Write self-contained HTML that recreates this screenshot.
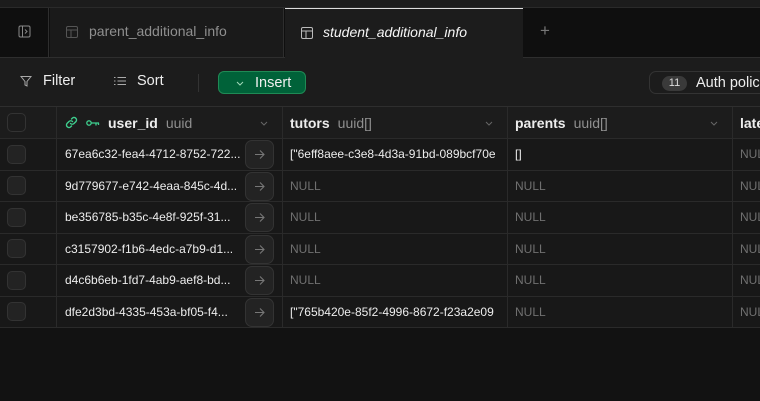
<!DOCTYPE html>
<html><head><meta charset="utf-8"><style>
*{box-sizing:border-box;margin:0;padding:0}
body{width:760px;height:401px;overflow:hidden;background:#121212;font-family:"Liberation Sans",sans-serif;color:#ededed;position:relative}
.abs{position:absolute;white-space:nowrap}
.top{left:0;top:0;width:760px;height:8px;background:#1c1c1c;border-bottom:1px solid #2a2a2a}
.tabs{left:0;top:8px;width:760px;height:50px;background:#0f0f0f;border-bottom:1px solid #2e2e2e}
.tool{left:0;top:58px;width:760px;height:49px;background:#1c1c1c;border-bottom:1px solid #2e2e2e}
.row{position:absolute;left:0;width:760px;background:#181818;border-bottom:1px solid #2a2a2a;font-size:12px}
.cell{position:absolute;top:0;height:100%;border-right:1px solid #2a2a2a;display:flex;align-items:center;white-space:nowrap;overflow:hidden}
.cb{width:19px;height:19px;border:1px solid #333;border-radius:5px;background:#232323;margin-left:7px}
.null{color:#707070}
.arr{position:absolute;left:188px;top:1px;width:29px;height:29px;border:1px solid #333;border-radius:7px;background:#232323}
</style></head><body>
<div class="abs top"></div>
<div class="abs tabs">
  <div class="abs" style="left:0;top:0;width:49px;height:49px;border-right:1px solid #2e2e2e;background:#0f0f0f">
    <svg class="abs" style="left:18px;top:17px" width="13" height="13" viewBox="0 0 13 13"><rect x="1" y="1" width="11" height="11" rx="1.5" fill="none" stroke="#888" stroke-width="1"/><line x1="4.5" y1="1" x2="4.5" y2="12" stroke="#888"/><path d="M7 4.5l2 2-2 2" fill="none" stroke="#888"/></svg>
  </div>
  <div class="abs" style="left:50px;top:0;width:234px;height:49px;background:#1a1a1a;border-right:1px solid #2e2e2e">
    <svg class="abs" style="left:16px;top:18px" width="12" height="12" viewBox="0 0 12 12"><rect x=".5" y=".5" width="11" height="11" rx="1.5" fill="none" stroke="#555"/><line x1=".5" y1="4" x2="11.5" y2="4" stroke="#555"/><line x1="5" y1="4" x2="5" y2="11.5" stroke="#555"/></svg>
    <div class="abs" style="left:39px;top:15px;font-size:14px;color:#8f8f8f">parent_additional_info</div>
  </div>
  <div class="abs" style="left:285px;top:0;width:238px;height:50px;background:#1c1c1c;border-top:1px solid #ddd">
    <svg class="abs" style="left:16px;top:18px" width="12" height="12" viewBox="0 0 12 12"><rect x=".5" y=".5" width="11" height="11" rx="1.5" fill="none" stroke="#bbb"/><line x1=".5" y1="4" x2="11.5" y2="4" stroke="#bbb"/><line x1="5" y1="4" x2="5" y2="11.5" stroke="#bbb"/></svg>
    <div class="abs" style="left:38px;top:15px;font-size:14px;font-style:italic;color:#f5f5f5">student_additional_info</div>
  </div>
  <div class="abs" style="left:540px;top:13px;font-size:17px;color:#777">+</div>
</div>
<div class="abs tool">
  <svg class="abs" style="left:20px;top:17px" width="12" height="12" viewBox="0 0 12 12"><path d="M1 1.5h10L7 6.5V11L5 10V6.5z" fill="none" stroke="#aaa"/></svg>
  <div class="abs" style="left:43px;top:15px;font-size:14.5px">Filter</div>
  <svg class="abs" style="left:114px;top:18px" width="12" height="10" viewBox="0 0 12 10"><g stroke="#aaa"><line x1="0" y1="1.5" x2="1.5" y2="1.5"/><line x1="3.5" y1="1.5" x2="12" y2="1.5"/><line x1="0" y1="5" x2="1.5" y2="5"/><line x1="3.5" y1="5" x2="12" y2="5"/><line x1="0" y1="8.5" x2="1.5" y2="8.5"/><line x1="3.5" y1="8.5" x2="12" y2="8.5"/></g></svg>
  <div class="abs" style="left:137px;top:15px;font-size:14.5px">Sort</div>
  <div class="abs" style="left:198px;top:16px;width:1px;height:18px;background:#333"></div>
  <div class="abs" style="left:218px;top:13px;width:88px;height:23px;border-radius:6px;background:#006239;border:1px solid #1f8a55">
    <svg class="abs" style="left:17px;top:9px" width="8" height="5" viewBox="0 0 8 5"><path d="M1 1l3 3 3-3" fill="none" stroke="#a0d8b8"/></svg>
    <div class="abs" style="left:36px;top:3px;font-size:14.5px;color:#f0f0f0">Insert</div>
  </div>
  <div class="abs" style="left:649px;top:13px;width:130px;height:23px;border-radius:7px;border:1px solid #333;background:#1c1c1c">
    <div class="abs" style="left:12px;top:4px;width:25px;height:15px;border-radius:8px;background:#3a3a3a;font-size:11px;color:#ddd;text-align:center;line-height:15px">11</div>
    <div class="abs" style="left:46px;top:3px;font-size:14.5px">Auth policies</div>
  </div>
</div>
<div class="row" style="top:107px;height:32px;background:#1c1c1c;font-size:14px;font-weight:bold">
  <div class="cell" style="left:0;width:57px"><div class="cb" style="background:#1c1c1c"></div></div>
  <div class="cell" style="left:57px;width:226px">
    <svg style="margin-left:8px" width="13" height="13" viewBox="0 0 13 13"><g fill="none" stroke="#3ecf8e" stroke-width="1.4" stroke-linecap="round"><path d="M5.5 7.5a2.5 2.5 0 0 0 3.5 0l2-2a2.5 2.5 0 0 0-3.5-3.5l-1 1"/><path d="M7.5 5.5a2.5 2.5 0 0 0-3.5 0l-2 2a2.5 2.5 0 0 0 3.5 3.5l1-1"/></g></svg>
    <svg style="margin-left:8px" width="14" height="8" viewBox="0 0 14 8"><g fill="none" stroke="#3ecf8e" stroke-width="1.3"><circle cx="3" cy="4" r="2.2"/><path d="M5.2 4H13M10 4v2.5M12.5 4v2"/></g></svg>
    <span style="margin-left:8px">user_id</span><span style="font-weight:normal;color:#8f8f8f;margin-left:8px">uuid</span>
    <svg style="position:absolute;right:14px;top:14px" width="8" height="5" viewBox="0 0 8 5"><path d="M1 1l3 3 3-3" fill="none" stroke="#666"/></svg></div>
  <div class="cell" style="left:283px;width:225px"><span style="margin-left:7px">tutors</span><span style="font-weight:normal;color:#8f8f8f;margin-left:8px">uuid[]</span><svg style="position:absolute;right:14px;top:14px" width="8" height="5" viewBox="0 0 8 5"><path d="M1 1l3 3 3-3" fill="none" stroke="#666"/></svg></div>
  <div class="cell" style="left:508px;width:225px"><span style="margin-left:7px">parents</span><span style="font-weight:normal;color:#8f8f8f;margin-left:8px">uuid[]</span><svg style="position:absolute;right:14px;top:14px" width="8" height="5" viewBox="0 0 8 5"><path d="M1 1l3 3 3-3" fill="none" stroke="#666"/></svg></div>
  <div class="cell" style="left:733px;width:40px;border:none"><span style="margin-left:7px">late</span></div>
</div>
<div id="rows"></div>
<script>
var d=[["67ea6c32-fea4-4712-8752-722...",'["6eff8aee-c3e8-4d3a-91bd-089bcf70e',"[]"],
["9d779677-e742-4eaa-845c-4d...",null,null],
["be356785-b35c-4e8f-925f-31...",null,null],
["c3157902-f1b6-4edc-a7b9-d1...",null,null],
["d4c6b6eb-1fd7-4ab9-aef8-bd...",null,null],
["dfe2d3bd-4335-453a-bf05-f4...",'["765b420e-85f2-4996-8672-f23a2e09',null]];
var h="";
var arr='<div class="arr"><svg style="position:absolute;left:8px;top:8px" width="11" height="11" viewBox="0 0 11 11"><path d="M1 5.5h9M6 1.5l4 4-4 4" fill="none" stroke="#777" stroke-width="1.1"/></svg></div>';
d.forEach(function(r,i){
 var t=139+i*31.5;
 function v(x){return x===null?'<span class="null">NULL</span>':x;}
 h+='<div class="row" style="top:'+t+'px;height:31.5px">'+
 '<div class="cell" style="left:0;width:57px"><div class="cb"></div></div>'+
 '<div class="cell" style="left:57px;width:226px"><span style="margin-left:8px">'+r[0]+'</span>'+arr+'</div>'+
 '<div class="cell" style="left:283px;width:225px"><span style="margin-left:7px">'+v(r[1])+'</span></div>'+
 '<div class="cell" style="left:508px;width:225px"><span style="margin-left:7px">'+v(r[2])+'</span></div>'+
 '<div class="cell" style="left:733px;width:40px;border:none"><span style="margin-left:7px" class="null">NULL</span></div></div>';
});
document.getElementById("rows").innerHTML=h;
</script>
</body></html>
